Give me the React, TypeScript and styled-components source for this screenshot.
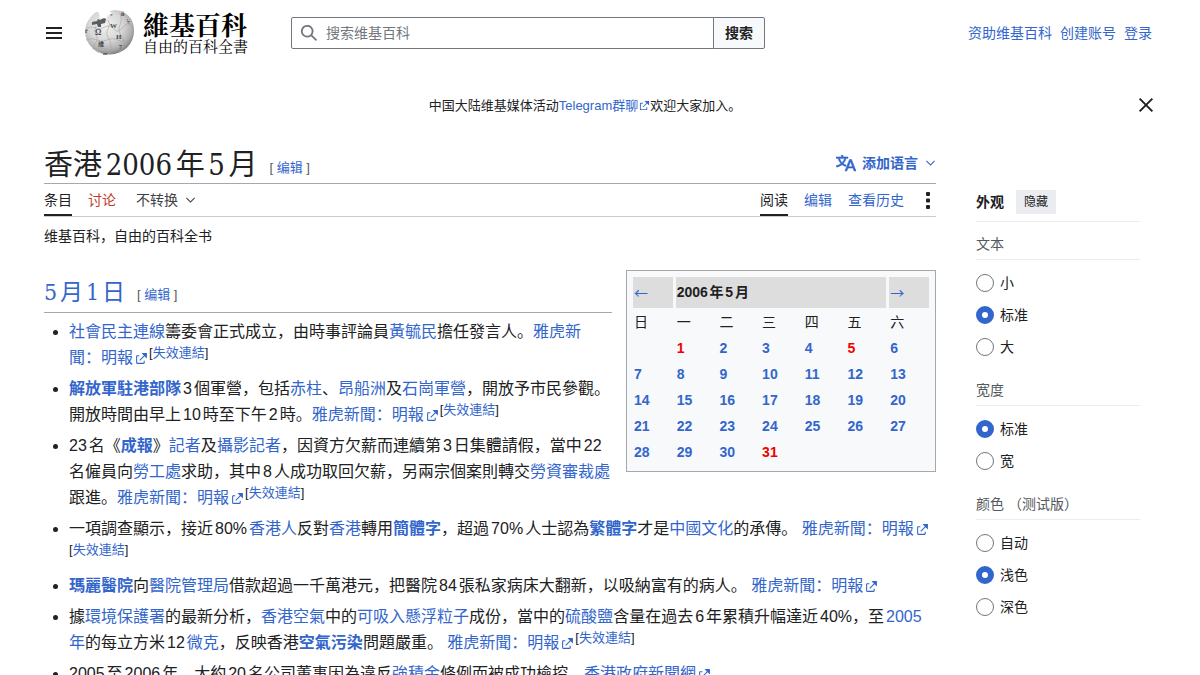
import React from 'react';
import styled, { createGlobalStyle } from 'styled-components';

const sans = `'Liberation Sans', 'Noto Sans CJK SC', sans-serif`;
const serif = `'DejaVu Serif Condensed', 'DejaVu Serif', 'Noto Sans CJK SC', serif`;
const blue = '#3366cc';
const ink = '#202122';

const GlobalStyle = createGlobalStyle`
  * { box-sizing: border-box; }
  body {
    margin: 0;
    background: #fff;
    color: ${ink};
    font: 14px/22px ${sans};
    text-autospace: normal;
  }
  a { color: ${blue}; text-decoration: none; }
  a:hover { text-decoration: underline; }
  button, input { font: inherit; color: inherit; }
  button { cursor: pointer; }
  svg { display: block; flex: none; }
`;

const Page = styled.div`
  padding: 0 44px;
`;

const Header = styled.header`
  display: flex;
  align-items: center;
  height: 66px;
`;

const IconButton = styled.button<{ $narrow?: boolean }>`
  display: flex;
  align-items: center;
  justify-content: center;
  width: ${p => (p.$narrow ? 16 : 20)}px;
  height: 32px;
  padding: 0;
  border: 0;
  background: none;
  color: ${ink};
`;

const Brand = styled.a`
  display: flex;
  align-items: center;
  gap: 8px;
  width: 207px;
  margin-left: 20px;
  color: #000;
  &:hover { text-decoration: none; }
`;

const BrandText = styled.span`
  display: flex;
  flex-direction: column;
  font-family: 'Noto Serif CJK TC', 'Noto Sans CJK TC', serif;
`;

const BrandName = styled.span`
  font-size: 26px;
  line-height: 26px;
  font-weight: 700;
`;

const BrandTag = styled.span`
  font-size: 15px;
  line-height: 18px;
`;

const Search = styled.form`
  display: flex;
  width: 474px;
  height: 32px;
`;

const SearchField = styled.label`
  display: flex;
  flex: 1;
  align-items: center;
  gap: 8px;
  padding: 0 8px;
  border: 1px solid #72777d;
  border-radius: 2px 0 0 2px;
  color: #72777d;
`;

const SearchInput = styled.input`
  flex: 1;
  min-width: 0;
  padding: 0;
  border: 0;
  outline: 0;
  background: none;
  color: ${ink};
  &::placeholder { color: #72777d; opacity: 1; }
`;

const SearchButton = styled.button`
  width: 52px;
  margin-left: -1px;
  padding: 0;
  border: 1px solid #72777d;
  border-radius: 0 2px 2px 0;
  background: #f8f9fa;
  font-weight: 700;
`;

const UserLinks = styled.nav`
  display: flex;
  gap: 8px;
  margin-left: auto;
  padding-right: 4px;
`;

const Notice = styled.div`
  display: flex;
  align-items: center;
  height: 78px;
  margin-bottom: 2px;
  font-size: 13px;
  text-autospace: no-autospace;
`;

const NoticeText = styled.p`
  flex: 1;
  margin: 0;
  padding: 2px 10px 0 0;
  text-align: center;
`;

const Columns = styled.div`
  display: grid;
  grid-template-columns: minmax(0, 1fr) 164px;
  gap: 40px;
  padding-right: 16px;
`;

const Main = styled.main`
  min-width: 0;
`;

const TitleBar = styled.div`
  display: flex;
  align-items: center;
  height: 38px;
  border-bottom: 1px solid #a2a9b1;
`;

const Title = styled.h1`
  margin: 0;
  font: 400 29px/36px ${serif};
`;

const EditSection = styled.span`
  margin-left: 12px;
  padding-top: 6px;
  font: 13px/20px ${sans};
  color: #54595d;
`;

const LanguageButton = styled.button`
  display: flex;
  align-items: center;
  gap: 6px;
  margin-left: auto;
  padding: 0 0 3px;
  border: 0;
  background: none;
  color: ${blue};
  font-weight: 700;
`;

const Toolbar = styled.div`
  display: flex;
  justify-content: space-between;
  height: 33px;
  border-bottom: 1px solid #c8ccd1;
`;

const TabGroup = styled.nav`
  display: flex;
  gap: 16px;
`;

const Tab = styled.a<{ $active?: boolean; $tone?: string }>`
  display: flex;
  align-items: center;
  height: 32px;
  padding-top: 2px;
  border-bottom: 2px solid ${p => (p.$active ? ink : 'transparent')};
  color: ${p => p.$tone || (p.$active ? ink : blue)};
`;

const VariantButton = styled.button`
  display: flex;
  align-items: center;
  gap: 6px;
  height: 32px;
  margin-left: 4px;
  padding: 0;
  border: 0;
  background: none;
  color: #404244;
`;

const SiteSub = styled.p`
  margin: 8px 0 23px;
`;

const Article = styled.article`
  font-size: 16px;
  line-height: 26px;
`;

const Calendar = styled.table`
  float: right;
  width: 310px;
  margin: 0 0 12px 14px;
  padding: 3px 3px 4px;
  border: 1px solid #a2a9b1;
  border-spacing: 3px;
  background: #f8f9fa;
  font-size: 14px;
  line-height: 21px;
  table-layout: fixed;
  th, td { padding: 1px; text-align: left; font-weight: 400; }
  td { font-weight: 700; }
`;

const CalendarHead = styled.th`
  height: 31px;
  background: #ddd;
  && { font-weight: ${p => (p.colSpan ? 700 : 400)}; }
`;

const MonthLink = styled.a`
  display: block;
  font-family: 'Noto Sans CJK SC', sans-serif;
`;

const DayLink = styled.a<{ $holiday: boolean }>`
  color: ${p => (p.$holiday ? '#f00000' : blue)};
`;

const DayHeading = styled.div`
  display: flow-root;
  border-bottom: 1px solid #a2a9b1;
`;

const DayHeadingRow = styled.div`
  display: flex;
  align-items: center;
  height: 42px;
  padding-top: 2px;
`;

const DayTitle = styled.h2`
  margin: 0;
  font: 400 23px/36px ${serif};
`;

const NewsList = styled.ul`
  margin: 6px 0 0;
  padding: 0 0 0 25px;
`;

const NewsItem = styled.li`
  margin-bottom: 5px;
`;

const DeadLink = styled.sup`
  font-size: 13px;
  line-height: 1;
  white-space: nowrap;
`;

const ExternalMark = styled.svg`
  display: inline-block;
  width: 13px;
  height: 13px;
  margin: 0 1px 0 2px;
  vertical-align: -2px;
`;

const NoticeMark = styled(ExternalMark)`
  width: 11px;
  height: 11px;
  margin: 0 0 0 1px;
  vertical-align: -1px;
`;

const Aside = styled.aside`
  padding-top: 44px;
`;

const AsideHeader = styled.div`
  display: flex;
  align-items: center;
  gap: 12px;
  height: 32px;
  padding-bottom: 7px;
  border-bottom: 1px solid #eaecf0;
  font-weight: 700;
`;

const HideButton = styled.button`
  width: 40px;
  height: 24px;
  padding: 0;
  border: 0;
  background: #eaecf0;
  font-size: 12px;
  font-weight: 400;
`;

const OptionGroup = styled.fieldset`
  margin: 0;
  padding: 0 0 5px;
  border: 0;
`;

const OptionTitle = styled.legend`
  width: 100%;
  height: 38px;
  margin-bottom: 7px;
  padding: 11px 0 4px;
  border-bottom: 1px solid #eaecf0;
  color: #54595d;
`;

const Option = styled.label`
  display: flex;
  align-items: center;
  gap: 6px;
  height: 32px;
`;

const Radio = styled.input`
  appearance: none;
  width: 18px;
  height: 18px;
  margin: 0;
  border: 1px solid #72777d;
  border-radius: 50%;
  background: #fff;
  &:checked { border: 6px solid ${blue}; }
`;

const Chevron = () => (
  <svg width="12" height="10" viewBox="0 0 24 20" fill="currentColor" aria-hidden="true">
    <path d="m20.500 4.750-7.500 7.500-7.500-7.500L4 6.250l9 9 9-9z" />
  </svg>
);

const externalPath =
  'M6 1h5v5L8.860 3.850 4.700 8 4 7.300l4.150-4.160zM2 3h2v1H2v6h6V8h1v2a1 1 0 0 1-1 1H2a1 1 0 0 1-1-1V4a1 1 0 0 1 1-1';

const ExternalIcon = () => (
  <ExternalMark viewBox="0 0 12 12" fill={blue} aria-hidden="true">
    <path d={externalPath} />
  </ExternalMark>
);

const Globe = () => (
  <svg width="51" height="48" viewBox="0 0 51 48" aria-hidden="true">
    <defs>
      <radialGradient id="globe" cx="0.42" cy="0.36" r="0.64">
        <stop offset="0" stopColor="#f2f2f2" />
        <stop offset="0.55" stopColor="#d6d6d6" />
        <stop offset="0.84" stopColor="#b0b0b0" />
        <stop offset="1" stopColor="#858585" />
      </radialGradient>
    </defs>
    <path
      d="M6 9Q8 6 12 3l2 0 2 4-1 2 5 1 3-1 1-3 4 1-1-4-2-1 6-1 6 1q13 5 13 20a24.500 23 0 0 1-49 1Q1 15 6 9z"
      fill="url(#globe)"
    />
    <path d="M8 13l5-1 1-2 2 1 4-2 2 1-1 4-4 1 0 3-3 0-1-3-5 1z" fill="#5c5c5c" />
    <g fill="none" stroke="#a2a2a2" strokeWidth="0.6">
      <path d="M3 19q5-2 9 0t9-1 9 2 9-2 10 1M2 31q6-3 11 0t10 0 11 0 13-1M8 40q8-2 14 0t19-2" />
      <path d="M12 17q-3 5 0 9t-1 9 4 9M24 11q3 4 0 9t1 10 0 15M36 4q3 7 0 12t2 12-3 15" />
    </g>
    <g fill="#4a4a4a" fontFamily="Liberation Serif, serif" fontSize="8" fontWeight="700">
      <text x="11" y="26">Ω</text>
      <text x="26" y="19" fontSize="7">W</text>
      <text x="32" y="30" fontSize="7">И</text>
      <text x="14" y="37" fontFamily="Noto Sans CJK TC, sans-serif" fontSize="6">維</text>
      <text x="43" y="15" fontSize="6">ל</text>
      <text x="35" y="40" fontSize="6">7</text>
      <text x="1" y="24" fontSize="6">ř</text>
      <text x="26" y="7" fontSize="5">v</text>
      <text x="37" y="7" fontSize="6">й</text>
      <text x="19" y="46" fontSize="5">m</text>
    </g>
  </svg>
);

const L = ({ children }: { children: React.ReactNode }) => <a href="#">{children}</a>;

const YahooSource = () => (
  <a href="#">
    雅虎新聞：明報
    <ExternalIcon />
  </a>
);

const Dead = () => (
  <DeadLink>
    [<a href="#">失效連結</a>]
  </DeadLink>
);

const Edit = () => (
  <EditSection>
    [ <a href="#">编辑</a> ]
  </EditSection>
);

const weekdays = ['日', '一', '二', '三', '四', '五', '六'];
const weeks = [0, 1, 2, 3, 4].map(w => weekdays.map((_, d) => w * 7 + d));
const holidays = [1, 5, 31];

const MonthCalendar = () => (
  <Calendar>
    <thead>
      <tr>
        <CalendarHead><MonthLink href="#" aria-label="上月">←</MonthLink></CalendarHead>
        <CalendarHead colSpan={5}>2006年5月</CalendarHead>
        <CalendarHead><MonthLink href="#" aria-label="下月">→</MonthLink></CalendarHead>
      </tr>
      <tr>{weekdays.map(d => <th key={d} scope="col">{d}</th>)}</tr>
    </thead>
    <tbody>
      {weeks.map(week => (
        <tr key={week[0]}>
          {week.map(day => (
            <td key={day}>
              {day > 0 && day < 32 && (
                <DayLink href="#" $holiday={holidays.includes(day)}>{day}</DayLink>
              )}
            </td>
          ))}
        </tr>
      ))}
    </tbody>
  </Calendar>
);

const optionGroups = [
  { name: 'text', title: '文本', options: ['小', '标准', '大'], selected: '标准' },
  { name: 'width', title: '宽度', options: ['标准', '宽'], selected: '标准' },
  { name: 'color', title: '颜色 （测试版）', options: ['自动', '浅色', '深色'], selected: '浅色' },
];

const Appearance = () => (
  <Aside>
    <AsideHeader>
      外观
      <HideButton type="button">隐藏</HideButton>
    </AsideHeader>
    {optionGroups.map(g => (
      <OptionGroup key={g.name}>
        <OptionTitle>{g.title}</OptionTitle>
        {g.options.map(o => (
          <Option key={o}>
            <Radio type="radio" name={g.name} defaultChecked={o === g.selected} />
            {o}
          </Option>
        ))}
      </OptionGroup>
    ))}
  </Aside>
);

export default function App() {
  return (
    <>
      <GlobalStyle />
      <Page lang="zh">
        <Header>
          <IconButton type="button" aria-label="主菜单">
            <svg width="16" height="12" viewBox="0 0 16 12" fill="currentColor">
              <path d="M0 0h16v2H0zM0 5h16v2H0zM0 10h16v2H0z" />
            </svg>
          </IconButton>
          <Brand href="#">
            <Globe />
            <BrandText>
              <BrandName>維基百科</BrandName>
              <BrandTag>自由的百科全書</BrandTag>
            </BrandText>
          </Brand>
          <Search onSubmit={e => e.preventDefault()}>
            <SearchField>
              <svg width="18" height="18" viewBox="0 0 20 20" fill="currentColor" aria-hidden="true">
                <path d="M12.200 13.600a7 7 0 1 1 1.400-1.400l5.400 5.400-1.400 1.400zM3 8a5 5 0 1 0 10 0A5 5 0 0 0 3 8" />
              </svg>
              <SearchInput type="search" placeholder="搜索维基百科" aria-label="搜索维基百科" />
            </SearchField>
            <SearchButton type="submit">搜索</SearchButton>
          </Search>
          <UserLinks>
            <a href="#">资助维基百科</a>
            <a href="#">创建账号</a>
            <a href="#">登录</a>
          </UserLinks>
        </Header>

        <Notice>
          <NoticeText>
            中国大陆维基媒体活动
            <a href="#">
              Telegram群聊
              <NoticeMark viewBox="0 0 12 12" fill={blue} aria-hidden="true">
                <path d={externalPath} />
              </NoticeMark>
            </a>
            欢迎大家加入。
          </NoticeText>
          <IconButton type="button" aria-label="关闭">
            <svg width="20" height="20" viewBox="0 0 20 20" fill="currentColor">
              <path d="m4.340 2.930 12.730 12.730-1.410 1.410L2.930 4.350zM17.070 4.340 4.340 17.070l-1.410-1.410L15.660 2.930z" />
            </svg>
          </IconButton>
        </Notice>

        <Columns>
          <Main>
            <TitleBar>
              <Title>香港2006年5月</Title>
              <Edit />
              <LanguageButton type="button">
                <svg
                  width="20"
                  height="20"
                  viewBox="0 0 20 20"
                  fill="currentColor"
                  stroke="currentColor"
                  strokeWidth="0.6"
                  aria-hidden="true"
                >
                  <path d="M20 18h-1.440a.6.6 0 0 1-.4-.12.8.8 0 0 1-.23-.31L17 15h-5l-1 2.540a.8.8 0 0 1-.22.3.6.6 0 0 1-.4.14H9l4.550-11.470h1.890zm-3.530-4.310L14.890 9.500a12 12 0 0 1-.39-1.240q-.09.37-.19.69l-.19.56-1.580 4.190zm-6.300-1.580a13.400 13.400 0 0 1-2.910-1.410 11.460 11.460 0 0 0 2.810-5.370H12V4H7.310a4 4 0 0 0-.2-.56C6.870 2.790 6.600 2 6.600 2l-1.470.5s.4.89.6 1.500H0v1.330h2.150A11.230 11.230 0 0 0 5 10.700a17.200 17.200 0 0 1-5 2.100q.56.82.87 1.380a23.300 23.300 0 0 0 5.220-2.510 15.600 15.600 0 0 0 3.560 1.770zM3.630 5.330h4.910a8.100 8.100 0 0 1-2.450 4.450 9.100 9.100 0 0 1-2.460-4.450" />
                </svg>
                添加语言
                <Chevron />
              </LanguageButton>
            </TitleBar>
            <Toolbar>
              <TabGroup>
                <Tab href="#" $active>条目</Tab>
                <Tab href="#" $tone="#bf3c2c">讨论</Tab>
                <VariantButton type="button">
                  不转换
                  <Chevron />
                </VariantButton>
              </TabGroup>
              <TabGroup>
                <Tab href="#" $active>阅读</Tab>
                <Tab href="#">编辑</Tab>
                <Tab href="#">查看历史</Tab>
                <IconButton type="button" $narrow aria-label="更多">
                  <svg width="4" height="18" viewBox="0 0 4 18" fill="currentColor">
                    <rect y="1" width="4" height="4" rx="1" />
                    <rect y="7.500" width="4" height="4" rx="1" />
                    <rect y="14" width="4" height="4" rx="1" />
                  </svg>
                </IconButton>
              </TabGroup>
            </Toolbar>
            <SiteSub>维基百科，自由的百科全书</SiteSub>

            <Article>
              <MonthCalendar />
              <DayHeading>
                <DayHeadingRow>
                  <DayTitle><a href="#">5月1日</a></DayTitle>
                  <Edit />
                </DayHeadingRow>
              </DayHeading>
              <NewsList>
                <NewsItem>
                  <L>社會民主連線</L>籌委會正式成立，由時事評論員<L>黃毓民</L>擔任發言人。<YahooSource /><Dead />
                </NewsItem>
                <NewsItem>
                  <b><L>解放軍駐港部隊</L></b>3個軍營，包括<L>赤柱</L>、<L>昂船洲</L>及<L>石崗軍營</L>，開放予市民參觀。開放時間由早上10時至下午2時。<YahooSource /><Dead />
                </NewsItem>
                <NewsItem>
                  23名《<b><L>成報</L></b>》<L>記者</L>及<L>攝影記者</L>，因資方欠薪而連續第3日集體請假，當中22名僱員向<L>勞工處</L>求助，其中8人成功取回欠薪，另兩宗個案則轉交<L>勞資審裁處</L>跟進。<YahooSource /><Dead />
                </NewsItem>
                <NewsItem>
                  一項調查顯示，接近80%<L>香港人</L>反對<L>香港</L>轉用<b><L>簡體字</L></b>，超過70%人士認為<b><L>繁體字</L></b>才是<L>中國文化</L>的承傳。 <YahooSource /><Dead />
                </NewsItem>
                <NewsItem>
                  <b><L>瑪麗醫院</L></b>向<L>醫院管理局</L>借款超過一千萬港元，把醫院84張私家病床大翻新，以吸納富有的病人。 <YahooSource />
                </NewsItem>
                <NewsItem>
                  據<L>環境保護署</L>的最新分析，<L>香港空氣</L>中的<L>可吸入懸浮粒子</L>成份，當中的<L>硫酸鹽</L>含量在過去6年累積升幅達近40%，至<L>2005年</L>的每立方米12<L>微克</L>，反映香港<b><L>空氣污染</L></b>問題嚴重。 <YahooSource /><Dead />
                </NewsItem>
                <NewsItem>
                  2005至2006年，大約20名公司董事因為違反<L>強積金</L>條例而被成功檢控。<L>香港政府新聞網<ExternalIcon /></L>
                </NewsItem>
              </NewsList>
            </Article>
          </Main>
          <Appearance />
        </Columns>
      </Page>
    </>
  );
}
